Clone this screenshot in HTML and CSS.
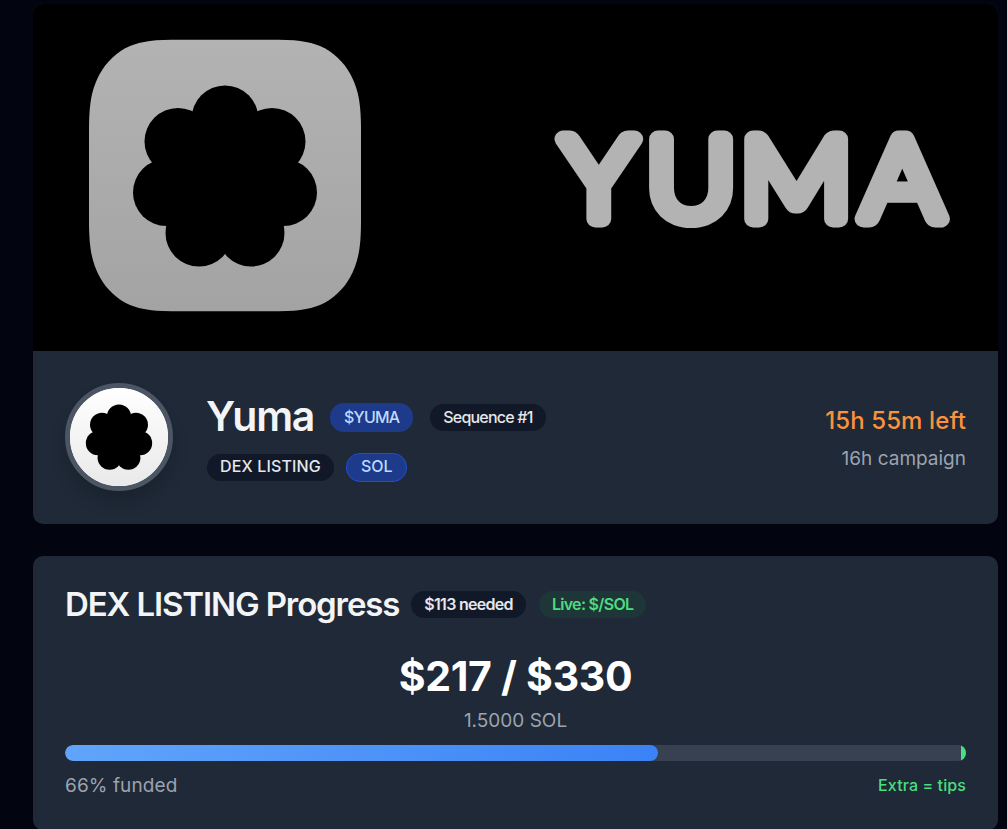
FILE: index.html
```
<!DOCTYPE html>
<html lang="en">
<head>
    <meta charset="UTF-8">
    <meta name="viewport" content="width=device-width, initial-scale=1.0">
    <title>Yuma</title>
    <link rel="stylesheet" href="styles.css">
</head>
<body>
    <div class="container">
        <section class="card">
            <div class="banner">
                <svg class="banner-art" viewBox="0 0 965 347">
                    <defs>
                        <linearGradient id="tile" x1="0" y1="0" x2="0" y2="1">
                            <stop offset="0" stop-color="#ffffff"/>
                            <stop offset="1" stop-color="#e9e9e9"/>
                        </linearGradient>
                        <symbol id="logo" viewBox="0 0 272 272">
                            <path fill="url(#tile)" d="M91 0H181C206 0 220 2 231 6.500C244 12 255 23 261 34C269 49 272 62 272 91V181C272 210 269 223 261 238C255 249 244 260 231 265.500C220 270 206 272 181 272H91C66 272 52 270 41 265.500C28 260 17 249 11 238C3 223 0 210 0 181V91C0 62 3 49 11 34C17 23 28 12 41 6.500C52 2 66 0 91 0Z"/>
                            <circle cx="136" cy="139.5" r="50"/>
                            <circle cx="136" cy="79.5" r="33.5"/>
                            <circle cx="183" cy="102" r="33.5"/>
                            <circle cx="194.5" cy="153" r="33.5"/>
                            <circle cx="162" cy="193.5" r="33.5"/>
                            <circle cx="110" cy="193.5" r="33.5"/>
                            <circle cx="77.5" cy="153" r="33.5"/>
                            <circle cx="89" cy="102" r="33.5"/>
                        </symbol>
                    </defs>
                    <use href="#logo" x="56" y="35.5" width="272" height="272"/>
                    <text class="wordmark" transform="translate(529.5 214.5) scale(1.09 1)" x="0 77.3 163.6 275">YUMA</text>
                </svg>
            </div>
            <div class="profile">
                <div class="avatar">
                    <svg viewBox="0 0 272 272"><use href="#logo"/></svg>
                </div>
                <div class="info">
                    <div class="row title">
                        <h1>Yuma</h1>
                        <span class="badge blue tight">$YUMA</span>
                        <span class="badge dark tight sequence">Sequence #1</span>
                    </div>
                    <div class="row tags">
                        <span class="badge dark">DEX LISTING</span>
                        <span class="badge blue outlined">SOL</span>
                    </div>
                </div>
                <div class="timer">
                    <div class="time-left">15h 55m left</div>
                    <div class="muted">16h campaign</div>
                </div>
            </div>
        </section>

        <section class="card progress-card">
            <div class="progress-head">
                <h2>DEX LISTING Progress</h2>
                <span class="badge dark tight">$113 needed</span>
                <span class="badge green tight">Live: $/SOL</span>
            </div>
            <div class="amount">$217 / $330</div>
            <div class="muted sol">1.5000 SOL</div>
            <div class="bar">
                <div class="bar-fill" style="width: 65.8%"></div>
                <div class="bar-end"></div>
            </div>
            <div class="progress-foot">
                <span class="muted">66% funded</span>
                <span class="tips">Extra = tips</span>
            </div>
        </section>
    </div>
</body>
</html>
```
FILE: styles.css
```
* {
    box-sizing: border-box;
}
body {
    margin: 0;
    height: 829px;
    overflow: hidden;
    background: #02050f;
    color: #f3f4f6;
    font-family: Inter, "Liberation Sans", sans-serif;
}
.container {
    padding: 4px 9px 0 33px;
}
.card {
    background: #1f2937;
    border-radius: 10px;
    overflow: hidden;
    white-space: nowrap;
}
.banner {
    height: 347px;
    background: #000;
}
.banner-art {
    display: block;
    width: 965px;
    height: 347px;
    opacity: 0.7;
}
.wordmark {
    font-family: Lato, sans-serif;
    font-size: 112px;
    font-weight: 300;
    fill: #fff;
    stroke: #fff;
    stroke-width: 17px;
    stroke-linejoin: round;
}
.profile {
    display: flex;
    height: 173px;
    padding: 32px;
}
.avatar {
    width: 108px;
    height: 108px;
    border: 5px solid #4b5563;
    border-radius: 50%;
    background: #fff;
    box-shadow: 0 12px 20px -4px rgba(0, 0, 0, 0.2);
}
.avatar svg {
    display: block;
    width: 98px;
    height: 98px;
    border-radius: 50%;
}
.info {
    margin-left: 34px;
    padding-top: 8px;
}
.row {
    display: flex;
    align-items: center;
}
h1,
h2 {
    margin: 0;
    font-weight: 600;
}
h1 {
    width: 123px;
    margin-left: -1px;
    margin-right: 1px;
    font-size: 41px;
    line-height: 50px;
    letter-spacing: -1.3px;
}
.badge {
    height: 27px;
    padding: 0 13px;
    border-radius: 14px;
    font-size: 16px;
    font-weight: 500;
    line-height: 27px;
}
.title .badge {
    margin-top: 2px;
}
.tight {
    letter-spacing: -0.8px;
}
.dark {
    background: #111827;
    color: #e5e7eb;
}
.blue {
    height: 29px;
    padding: 0 15px;
    background: #1e3a8a;
    color: #bfdbfe;
    line-height: 29px;
}
.blue.tight {
    padding: 0 14px;
}
.outlined {
    padding: 0 13px 0 14px;
    border: 1px solid #1d4ed8;
    line-height: 25px;
}
.green {
    background: #1f3638;
    color: #4ade80;
}
.sequence {
    margin-left: 17px;
}
.tags {
    gap: 12px;
    margin-top: 12px;
}
.tags .dark {
    letter-spacing: 0.15px;
    line-height: 25px;
}
.timer {
    margin-left: auto;
    padding-top: 21px;
    text-align: right;
}
.time-left {
    color: #fb923c;
    font-size: 24px;
    font-weight: 500;
    line-height: 34px;
    letter-spacing: 0.1px;
}
.muted {
    color: #9ca3af;
    font-size: 19px;
    line-height: 28px;
}
.timer .muted {
    margin-top: 7px;
}
.progress-card {
    height: 274px;
    margin-top: 32px;
    padding: 28px 32px;
}
.progress-head {
    display: flex;
    align-items: center;
    gap: 13px;
    height: 40px;
}
h2 {
    margin-right: -1px;
    font-size: 33px;
    letter-spacing: -1.12px;
}
.progress-head .tight {
    font-weight: 600;
    letter-spacing: -0.7px;
}
.amount {
    margin-top: 27px;
    color: #fff;
    font-size: 41px;
    font-weight: 700;
    line-height: 50px;
    letter-spacing: -0.3px;
    text-align: center;
}
.sol {
    margin-top: 6px;
    text-align: center;
}
.bar {
    display: flex;
    justify-content: space-between;
    height: 16px;
    margin-top: 10px;
    border-radius: 8px;
    background: #374151;
    overflow: hidden;
}
.bar-fill {
    border-radius: 8px;
    background: linear-gradient(90deg, #60a5fa, #3b82f6);
}
.bar-end {
    width: 5px;
    background: #4ade80;
}
.progress-foot {
    display: flex;
    justify-content: space-between;
    align-items: center;
    margin-top: 11px;
}
.progress-foot .muted {
    letter-spacing: 0.1px;
}
.tips {
    margin-top: -2px;
    color: #4ade80;
    font-size: 16px;
    font-weight: 500;
    letter-spacing: 0.1px;
}
```
